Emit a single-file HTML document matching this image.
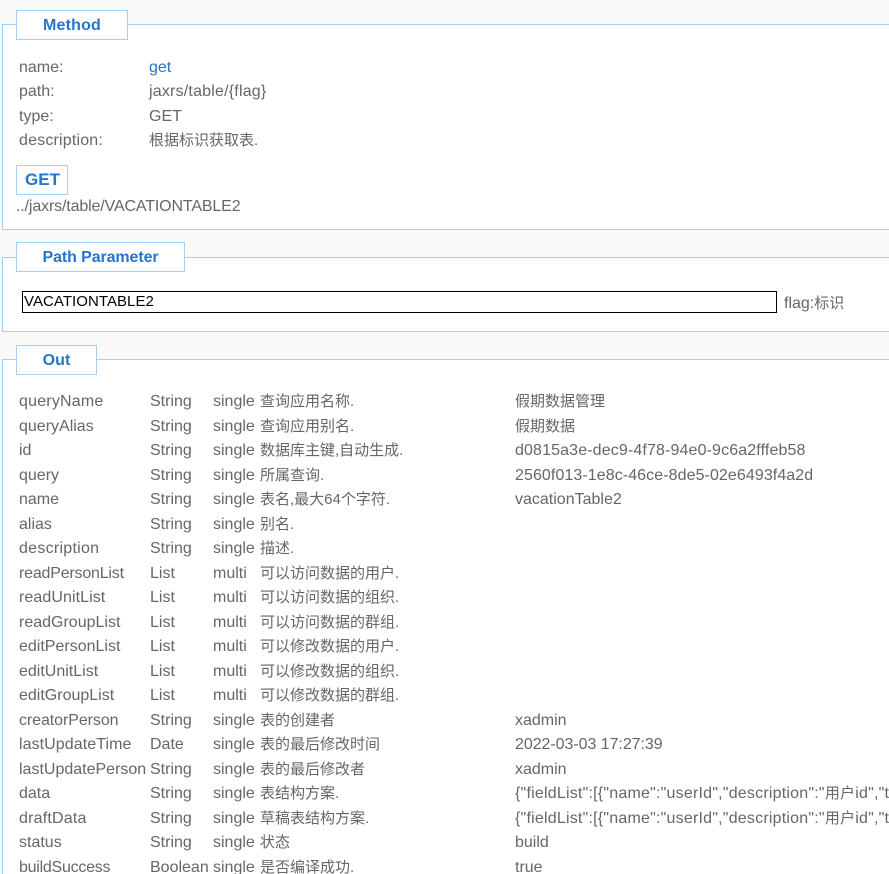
<!DOCTYPE html>
<html><head><meta charset="utf-8"><style>
html,body{margin:0;padding:0;width:889px;height:874px;overflow:hidden;background:#fafafa}
body{position:relative;font-family:"Liberation Sans","Noto Sans CJK SC",sans-serif;font-size:16px;color:#666}
i{font-style:normal;font-size:15px}
.fs{position:absolute;left:2px;width:900px;box-sizing:border-box;border:1px solid #a6d0f3;background:#fff}
.lg{position:absolute;left:16px;box-sizing:border-box;height:30px;border:1px solid #a6d0f3;background:#fff;color:#2575cc;font-weight:bold;line-height:30px;text-align:center;letter-spacing:.1px}
.t{position:absolute;white-space:nowrap;line-height:20px;margin-top:1px}
.r{position:absolute;left:0;width:889px;height:20px;line-height:20px;white-space:nowrap;margin-top:1px}
.r span{position:absolute;top:0}
.a{left:19px}.b{left:150px}.c{left:213px}.d{left:260px;font-size:15px}.e{left:515px}
.u{letter-spacing:.08px}.j{letter-spacing:.21px}
</style></head><body>
<div class="fs" style="top:24px;height:206px"></div>
<div class="lg" style="top:10px;width:112px;letter-spacing:.2px">Method</div>
<div class="t" style="left:19px;top:57px">name:</div><div class="t" style="left:149px;top:57px;color:#2575cc">get</div>
<div class="t" style="left:19px;top:81px">path:</div><div class="t" style="left:149px;top:81px;letter-spacing:.2px">jaxrs/table/{flag}</div>
<div class="t" style="left:19px;top:106px">type:</div><div class="t" style="left:149px;top:106px">GET</div>
<div class="t" style="left:19px;top:130px;letter-spacing:.18px">description:</div><div class="t" style="left:149px;top:130px;font-size:15px">根据标识获取表.</div>
<div class="lg" style="top:165px;width:52px;font-size:17px;line-height:28px;letter-spacing:0;padding-left:1px">GET</div>
<div class="t" style="left:16px;top:196px;letter-spacing:-.14px">../jaxrs/table/VACATIONTABLE2</div>

<div class="fs" style="top:257px;height:75px"></div>
<div class="lg" style="top:242px;width:169px;letter-spacing:-.1px">Path Parameter</div>
<div style="position:absolute;left:22px;top:291px;width:755px;height:22px;box-sizing:border-box;border:1px solid #000;background:#fff;color:#000;line-height:20px;padding-left:1px;font-size:15px;letter-spacing:.05px">VACATIONTABLE2</div>
<div class="t" style="left:784px;top:293px">flag:<i>标识</i></div>

<div class="fs" style="top:359px;height:530px"></div>
<div class="lg" style="top:345px;width:81px">Out</div>

<div class="r" style="top:391px"><span class="a" style="letter-spacing:.2px">queryName</span><span class="b">String</span><span class="c">single</span><span class="d">查询应用名称.</span><span class="e"><i>假期数据管理</i></span></div>
<div class="r" style="top:416px"><span class="a">queryAlias</span><span class="b">String</span><span class="c">single</span><span class="d">查询应用别名.</span><span class="e"><i>假期数据</i></span></div>
<div class="r" style="top:440px"><span class="a">id</span><span class="b">String</span><span class="c">single</span><span class="d">数据库主键,自动生成.</span><span class="e" style="letter-spacing:.13px">d0815a3e-dec9-4f78-94e0-9c6a2fffeb58</span></div>
<div class="r" style="top:465px"><span class="a">query</span><span class="b">String</span><span class="c">single</span><span class="d">所属查询.</span><span class="e u">2560f013-1e8c-46ce-8de5-02e6493f4a2d</span></div>
<div class="r" style="top:489px"><span class="a">name</span><span class="b">String</span><span class="c">single</span><span class="d">表名,最大64个字符.</span><span class="e">vacationTable2</span></div>
<div class="r" style="top:514px"><span class="a">alias</span><span class="b">String</span><span class="c">single</span><span class="d">别名.</span></div>
<div class="r" style="top:538px"><span class="a" style="letter-spacing:.27px">description</span><span class="b">String</span><span class="c">single</span><span class="d">描述.</span></div>
<div class="r" style="top:563px"><span class="a" style="letter-spacing:-.2px">readPersonList</span><span class="b">List</span><span class="c">multi</span><span class="d">可以访问数据的用户.</span></div>
<div class="r" style="top:587px"><span class="a" style="letter-spacing:.08px">readUnitList</span><span class="b">List</span><span class="c">multi</span><span class="d">可以访问数据的组织.</span></div>
<div class="r" style="top:612px"><span class="a">readGroupList</span><span class="b">List</span><span class="c">multi</span><span class="d">可以访问数据的群组.</span></div>
<div class="r" style="top:636px"><span class="a">editPersonList</span><span class="b">List</span><span class="c">multi</span><span class="d">可以修改数据的用户.</span></div>
<div class="r" style="top:661px"><span class="a">editUnitList</span><span class="b">List</span><span class="c">multi</span><span class="d">可以修改数据的组织.</span></div>
<div class="r" style="top:685px"><span class="a">editGroupList</span><span class="b">List</span><span class="c">multi</span><span class="d">可以修改数据的群组.</span></div>
<div class="r" style="top:710px"><span class="a" style="letter-spacing:-.08px">creatorPerson</span><span class="b">String</span><span class="c">single</span><span class="d">表的创建者</span><span class="e">xadmin</span></div>
<div class="r" style="top:734px"><span class="a" style="letter-spacing:.07px">lastUpdateTime</span><span class="b">Date</span><span class="c">single</span><span class="d">表的最后修改时间</span><span class="e" style="letter-spacing:-.05px">2022-03-03 17:27:39</span></div>
<div class="r" style="top:759px"><span class="a">lastUpdatePerson</span><span class="b">String</span><span class="c">single</span><span class="d">表的最后修改者</span><span class="e">xadmin</span></div>
<div class="r" style="top:783px"><span class="a">data</span><span class="b">String</span><span class="c">single</span><span class="d">表结构方案.</span><span class="e j">{"fieldList":[{"name":"userId","description":"<i>用户</i>id","type"</span></div>
<div class="r" style="top:808px"><span class="a" style="letter-spacing:.2px">draftData</span><span class="b">String</span><span class="c">single</span><span class="d">草稿表结构方案.</span><span class="e j">{"fieldList":[{"name":"userId","description":"<i>用户</i>id","type"</span></div>
<div class="r" style="top:832px"><span class="a">status</span><span class="b">String</span><span class="c">single</span><span class="d">状态</span><span class="e">build</span></div>
<div class="r" style="top:857px"><span class="a" style="letter-spacing:-.25px">buildSuccess</span><span class="b">Boolean</span><span class="c">single</span><span class="d">是否编译成功.</span><span class="e">true</span></div>
</body></html>
